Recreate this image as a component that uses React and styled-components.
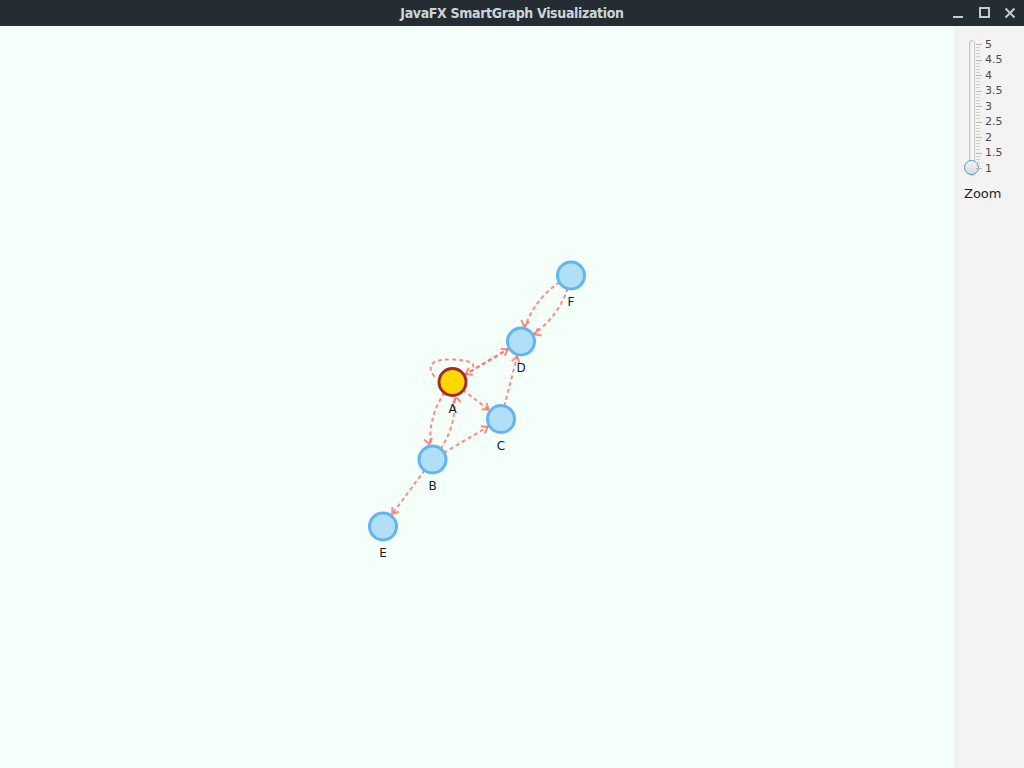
import styled, { createGlobalStyle } from "styled-components";

const GlobalStyle = createGlobalStyle`
  html, body {
    margin: 0;
    padding: 0;
    background: #f5fffa;
  }
`;

const Window = styled.div`
  width: 1024px;
  height: 768px;
  display: flex;
  flex-direction: column;
  overflow: hidden;
  font-family: "DejaVu Sans", sans-serif;
`;

const TitleBar = styled.div`
  height: 26px;
  flex: none;
  display: grid;
  grid-template-columns: 1fr auto 1fr;
  align-items: center;
  background: #242d32;
`;

const Title = styled.div`
  grid-column: 2;
  color: #cdd5d9;
  font-family: "DejaVu Sans Condensed", "DejaVu Sans", sans-serif;
  font-weight: bold;
  font-size: 14px;
  letter-spacing: -0.35px;
`;

const Controls = styled.div`
  grid-column: 3;
  justify-self: end;
  display: flex;
  align-items: center;
  gap: 14px;
  padding-right: 8px;
`;

const Body = styled.div`
  flex: 1;
  display: flex;
  min-height: 0;
`;

const Canvas = styled.div`
  flex: 1;
  background: #f5fffa;
`;

const Panel = styled.div`
  width: 70px;
  flex: none;
  background: #f3f3f3;
  display: flex;
  flex-direction: column;
  padding: 14px 0 0 10px;
  box-sizing: border-box;
`;

const Slider = styled.div`
  display: flex;
  height: 142px;
`;

const TrackArea = styled.div`
  position: relative;
  width: 12px;
  height: 142px;
`;

const Track = styled.div`
  position: absolute;
  left: 5px;
  top: 0;
  width: 4px;
  height: 134px;
  border: 1px solid #c8c8c8;
  border-radius: 3px;
  background: linear-gradient(to right, #e6e6e6, #ffffff);
`;

const Thumb = styled.div`
  position: absolute;
  left: 0;
  width: 13px;
  height: 13px;
  border: 1.5px solid #3d9fe2;
  border-radius: 50%;
  background: linear-gradient(#f2f2f2, #dcdcdc);
`;

const Scale = styled.div`
  position: relative;
  flex: 1;
`;

const Tick = styled.div`
  position: absolute;
  left: 0;
  width: ${(p) => (p.$major ? "6px" : "4px")};
  height: 1px;
  background: ${(p) => (p.$major ? "#b8b8b8" : "#cfcfcf")};
`;

const TickLabel = styled.span`
  position: absolute;
  left: 9px;
  font-size: 11px;
  line-height: 12px;
  color: #4a4a4a;
`;

const ZoomLabel = styled.div`
  margin-top: 4px;
  font-size: 13px;
  color: #1e1e1e;
`;

const GraphSvg = styled.svg`
  display: block;
  width: 100%;
  height: 100%;
`;

const NodeLabel = styled.text`
  font-family: "DejaVu Sans", sans-serif;
  font-size: 12px;
  fill: #1a1a1a;
`;

const EDGE = "#ff6d66";

const nodes = {
  A: [452.5, 382],
  B: [432.5, 459.5],
  C: [501, 419],
  D: [521, 341.5],
  E: [383, 526.5],
  F: [571, 275.5],
};

const edges = [
  { s: "F", t: "D", curve: 20 },
  { s: "F", t: "D", curve: -20 },
  { s: "A", t: "D" },
  { s: "D", t: "A" },
  { s: "A", t: "C" },
  { s: "C", t: "D" },
  { s: "A", t: "B", curve: 20 },
  { s: "B", t: "A", curve: 20 },
  { s: "B", t: "C" },
  { s: "B", t: "E" },
];

// compute path and arrow head for an edge
function edgeShape(e) {
  const [sx, sy] = nodes[e.s];
  const [tx, ty] = nodes[e.t];
  const dx = tx - sx;
  const dy = ty - sy;
  const len = Math.hypot(dx, dy);
  let d;
  let fx = sx;
  let fy = sy;
  if (e.curve) {
    const cx = (sx + tx) / 2 + (-dy / len) * e.curve;
    const cy = (sy + ty) / 2 + (dx / len) * e.curve;
    d = `M ${sx} ${sy} Q ${cx} ${cy} ${tx} ${ty}`;
    fx = cx;
    fy = cy;
  } else {
    d = `M ${sx} ${sy} L ${tx} ${ty}`;
  }
  const ul = Math.hypot(tx - fx, ty - fy);
  const ux = (tx - fx) / ul;
  const uy = (ty - fy) / ul;
  const px = tx - ux * 15.5;
  const py = ty - uy * 15.5;
  const a = (35 * Math.PI) / 180;
  const arm = (ang) => {
    const rx = ux * Math.cos(ang) - uy * Math.sin(ang);
    const ry = ux * Math.sin(ang) + uy * Math.cos(ang);
    return [px - rx * 7, py - ry * 7];
  };
  const [a1x, a1y] = arm(a);
  const [a2x, a2y] = arm(-a);
  const arrow = `M ${a1x} ${a1y} L ${px} ${py} L ${a2x} ${a2y}`;
  return { d, arrow };
}

const ticks = [];
for (let i = 0; i <= 40; i++) {
  ticks.push({ y: 4 + i * 3.1, major: i % 5 === 0 });
}
const tickLabels = ["5", "4.5", "4", "3.5", "3", "2.5", "2", "1.5", "1"];

function Graph() {
  return (
    <GraphSvg viewBox="0 26 954 742">
      <g stroke={EDGE} strokeOpacity="0.8" strokeWidth="2" fill="none">
        {edges.map((e, i) => {
          const { d, arrow } = edgeShape(e);
          return (
            <g key={i}>
              <path d={d} strokeDasharray="2 5" strokeLinecap="square" />
              <path d={arrow} />
            </g>
          );
        })}
        <path
          d="M 434 376 C 424 362, 438 359, 453 359.5 C 468 360, 477 363, 472 369"
          strokeDasharray="2 5"
          strokeLinecap="square"
        />
      </g>
      {Object.entries(nodes).map(([id, [x, y]]) => (
        <g key={id}>
          <circle
            cx={x}
            cy={y}
            r="13.5"
            strokeWidth="3"
            fill={id === "A" ? "#ffd700" : "#b1dff7"}
            stroke={id === "A" ? "#a52a2a" : "#61b5f1"}
          />
          <NodeLabel x={x} y={y + 30.5} textAnchor="middle">
            {id}
          </NodeLabel>
        </g>
      ))}
    </GraphSvg>
  );
}

function WindowButtons() {
  return (
    <Controls>
      <svg width="12" height="12" viewBox="0 0 12 12">
        <rect x="1" y="9" width="10" height="2" fill="#c3cbcf" />
      </svg>
      <svg width="12" height="12" viewBox="0 0 12 12">
        <rect x="2" y="1" width="9" height="9" fill="none" stroke="#c3cbcf" strokeWidth="2" />
      </svg>
      <svg width="12" height="12" viewBox="0 0 12 12">
        <path d="M1.5 1.5 L10.5 10.5 M10.5 1.5 L1.5 10.5" stroke="#c3cbcf" strokeWidth="2" />
      </svg>
    </Controls>
  );
}

export default function App() {
  return (
    <Window>
      <GlobalStyle />
      <TitleBar>
        <Title>JavaFX SmartGraph Visualization</Title>
        <WindowButtons />
      </TitleBar>
      <Body>
        <Canvas>
          <Graph />
        </Canvas>
        <Panel>
          <Slider>
            <TrackArea>
              <Track />
              <Thumb style={{ top: 120 }} />
            </TrackArea>
            <Scale>
              {ticks.map((t, i) => (
                <Tick key={i} $major={t.major} style={{ top: t.y }} />
              ))}
              {tickLabels.map((l, i) => (
                <TickLabel key={l} style={{ top: 4 + i * 15.5 - 5.5 }}>
                  {l}
                </TickLabel>
              ))}
            </Scale>
          </Slider>
          <ZoomLabel>Zoom</ZoomLabel>
        </Panel>
      </Body>
    </Window>
  );
}
